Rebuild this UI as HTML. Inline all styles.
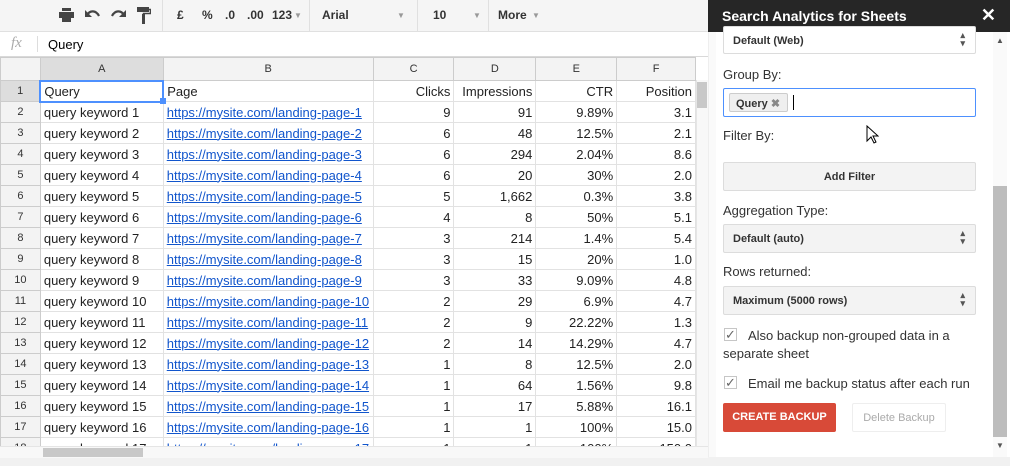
<!DOCTYPE html><html><head><style>
*{box-sizing:border-box;margin:0;padding:0}
body{width:1010px;height:466px;overflow:hidden;background:#fff;font-family:"Liberation Sans",Arial,sans-serif;position:relative}
.abs{position:absolute}
#tb{left:0;top:0;width:708px;height:32px;background:#f5f5f5;border-bottom:1px solid #e0e0e0;font-size:12px;font-weight:bold;color:#333}
#tb span{position:absolute;top:8px}
.dv{position:absolute;top:0;width:1px;height:32px;background:#e0e0e0}
#fx{left:0;top:32px;width:708px;height:25px;border-bottom:1px solid #d9d9d9;font-size:13px}
#grid{left:0;top:57px;width:696px;height:389px;overflow:hidden}
table{border-collapse:collapse;table-layout:fixed;font-size:13px;color:#222}
td{height:21px;border:1px solid #e2e2e2;padding:0 3px;white-space:nowrap;overflow:hidden}
tr.h td{height:23px;background:#f3f3f3;text-align:center;font-size:11px;color:#333;border-color:#ccc}
td.rh{background:#f3f3f3;text-align:center;font-size:11px;color:#333;border-color:#ccc}
td.r{text-align:right}
a{color:#1155cc;text-decoration:underline}
#side{left:708px;top:0;width:302px;height:466px;background:#fff}
#sh{left:708px;top:0;width:302px;height:32px;background:#262626;color:#fff;font-weight:bold;font-size:14px;padding:8px 0 0 14px}
.lbl{position:absolute;left:723px;font-size:13px;color:#333}
.sel{position:absolute;left:723px;width:253px;height:29px;border:1px solid #dcdcdc;border-radius:2px;background:#f3f3f3;font-size:11px;font-weight:bold;color:#333;padding:8px 0 0 9px}
.sel:after{content:"\25B4\A\25BE";white-space:pre;position:absolute;right:10px;top:4px;font-size:9px;line-height:8px;color:#555}
.btn{position:absolute;left:723px;width:253px;height:29px;border:1px solid #dcdcdc;border-radius:2px;background:#f3f3f3;font-size:11px;font-weight:bold;color:#333;text-align:center;padding-top:8px}
.cb{position:absolute;left:724px;width:13px;height:13px;border:1px solid #c6c6c6;background:#fff;color:#666;font-size:13px;line-height:11px;text-align:center}
.ar{color:#999;font-size:8px}
</style></head><body>
<div id="tb" class="abs">
<svg class="abs" style="left:59px;top:8px" width="15" height="14"><rect x="3" y="0" width="9" height="3" fill="#444"/><rect x="0" y="4" width="15" height="6" fill="#444"/><rect x="3" y="9" width="9" height="5" fill="#444"/></svg>
<svg class="abs" style="left:85px;top:9px" width="15" height="10"><path d="M2 6 C5 1 11 1 14 7" stroke="#444" stroke-width="2.2" fill="none"/><path d="M0 1v7h7z" fill="#444"/></svg>
<svg class="abs" style="left:111px;top:9px" width="15" height="10"><path d="M13 6 C10 1 4 1 1 7" stroke="#444" stroke-width="2.2" fill="none"/><path d="M15 1v7h-7z" fill="#444"/></svg>
<svg class="abs" style="left:137px;top:7px" width="14" height="17"><rect x="0" y="0" width="12" height="5" fill="#444"/><rect x="5" y="7" width="3" height="10" fill="#444"/><path d="M12 2.5h1.5v4H6.5v1" stroke="#444" fill="none" stroke-width="1.5"/></svg>
<div class="dv" style="left:162px"></div>
<span style="left:177px">£</span><span style="left:202px">%</span><span style="left:225px">.0</span><span style="left:247px">.00</span><span style="left:272px">123</span><span class="ar" style="left:294px;top:11px">&#9660;</span>
<div class="dv" style="left:309px"></div>
<span style="left:322px">Arial</span><span class="ar" style="left:397px;top:11px">&#9660;</span>
<div class="dv" style="left:417px"></div>
<span style="left:433px">10</span><span class="ar" style="left:473px;top:11px">&#9660;</span>
<div class="dv" style="left:488px"></div>
<span style="left:498px">More</span><span class="ar" style="left:532px;top:11px">&#9660;</span>
</div>
<div id="fx" class="abs"><span class="abs" style="left:11px;top:3px;font-family:'Liberation Serif',serif;font-style:italic;color:#aaa;font-size:15px">fx</span><div class="abs" style="left:37px;top:4px;width:1px;height:16px;background:#ddd"></div><span class="abs" style="left:48px;top:5px">Query</span></div>
<div id="grid" class="abs"><table>
<colgroup><col style="width:40px"><col style="width:123px"><col style="width:210px"><col style="width:81px"><col style="width:82px"><col style="width:81px"><col style="width:79px"></colgroup>
<tr class="h"><td></td><td style="background:#ddd">A</td><td>B</td><td>C</td><td>D</td><td>E</td><td>F</td></tr>
<tr><td class="rh" style="background:#ddd">1</td><td style="border:2px solid #4d90fe">Query</td><td>Page</td><td class="r">Clicks</td><td class="r">Impressions</td><td class="r">CTR</td><td class="r">Position</td></tr>
<tr><td class="rh">2</td><td>query keyword 1</td><td><a>https://mysite.com/landing-page-1</a></td><td class="r">9</td><td class="r">91</td><td class="r">9.89%</td><td class="r">3.1</td></tr>
<tr><td class="rh">3</td><td>query keyword 2</td><td><a>https://mysite.com/landing-page-2</a></td><td class="r">6</td><td class="r">48</td><td class="r">12.5%</td><td class="r">2.1</td></tr>
<tr><td class="rh">4</td><td>query keyword 3</td><td><a>https://mysite.com/landing-page-3</a></td><td class="r">6</td><td class="r">294</td><td class="r">2.04%</td><td class="r">8.6</td></tr>
<tr><td class="rh">5</td><td>query keyword 4</td><td><a>https://mysite.com/landing-page-4</a></td><td class="r">6</td><td class="r">20</td><td class="r">30%</td><td class="r">2.0</td></tr>
<tr><td class="rh">6</td><td>query keyword 5</td><td><a>https://mysite.com/landing-page-5</a></td><td class="r">5</td><td class="r">1,662</td><td class="r">0.3%</td><td class="r">3.8</td></tr>
<tr><td class="rh">7</td><td>query keyword 6</td><td><a>https://mysite.com/landing-page-6</a></td><td class="r">4</td><td class="r">8</td><td class="r">50%</td><td class="r">5.1</td></tr>
<tr><td class="rh">8</td><td>query keyword 7</td><td><a>https://mysite.com/landing-page-7</a></td><td class="r">3</td><td class="r">214</td><td class="r">1.4%</td><td class="r">5.4</td></tr>
<tr><td class="rh">9</td><td>query keyword 8</td><td><a>https://mysite.com/landing-page-8</a></td><td class="r">3</td><td class="r">15</td><td class="r">20%</td><td class="r">1.0</td></tr>
<tr><td class="rh">10</td><td>query keyword 9</td><td><a>https://mysite.com/landing-page-9</a></td><td class="r">3</td><td class="r">33</td><td class="r">9.09%</td><td class="r">4.8</td></tr>
<tr><td class="rh">11</td><td>query keyword 10</td><td><a>https://mysite.com/landing-page-10</a></td><td class="r">2</td><td class="r">29</td><td class="r">6.9%</td><td class="r">4.7</td></tr>
<tr><td class="rh">12</td><td>query keyword 11</td><td><a>https://mysite.com/landing-page-11</a></td><td class="r">2</td><td class="r">9</td><td class="r">22.22%</td><td class="r">1.3</td></tr>
<tr><td class="rh">13</td><td>query keyword 12</td><td><a>https://mysite.com/landing-page-12</a></td><td class="r">2</td><td class="r">14</td><td class="r">14.29%</td><td class="r">4.7</td></tr>
<tr><td class="rh">14</td><td>query keyword 13</td><td><a>https://mysite.com/landing-page-13</a></td><td class="r">1</td><td class="r">8</td><td class="r">12.5%</td><td class="r">2.0</td></tr>
<tr><td class="rh">15</td><td>query keyword 14</td><td><a>https://mysite.com/landing-page-14</a></td><td class="r">1</td><td class="r">64</td><td class="r">1.56%</td><td class="r">9.8</td></tr>
<tr><td class="rh">16</td><td>query keyword 15</td><td><a>https://mysite.com/landing-page-15</a></td><td class="r">1</td><td class="r">17</td><td class="r">5.88%</td><td class="r">16.1</td></tr>
<tr><td class="rh">17</td><td>query keyword 16</td><td><a>https://mysite.com/landing-page-16</a></td><td class="r">1</td><td class="r">1</td><td class="r">100%</td><td class="r">15.0</td></tr>
<tr><td class="rh">18</td><td>query keyword 17</td><td><a>https://mysite.com/landing-page-17</a></td><td class="r">1</td><td class="r">1</td><td class="r">100%</td><td class="r">150.0</td></tr>
</table></div>
<div class="abs" style="left:160px;top:98px;width:6px;height:6px;background:#4d90fe"></div>
<div class="abs" style="left:696px;top:80px;width:12px;height:366px;background:#f8f8f8;border-left:1px solid #e5e5e5"></div>
<div class="abs" style="left:697px;top:82px;width:10px;height:26px;background:#c8c8c8"></div>
<div class="abs" style="left:0;top:446px;width:708px;height:12px;background:#f8f8f8;border-top:1px solid #e5e5e5"></div>
<div class="abs" style="left:43px;top:448px;width:100px;height:9px;background:#c8c8c8"></div>
<div class="abs" style="left:0;top:458px;width:708px;height:8px;background:#f1f1f1"></div>
<div id="side" class="abs"></div>
<div class="abs" style="left:708px;top:32px;width:8px;height:434px;background:#fafafa;border-left:1px solid #eee"></div>
<div id="sh" class="abs">Search Analytics for Sheets<span style="position:absolute;right:14px;top:5px;font-size:18px">&#10005;</span></div>
<div class="sel" style="top:26px;height:28px;background:#fff">Default (Web)</div>
<div class="lbl" style="top:67px">Group By:</div>
<div class="abs" style="left:723px;top:88px;width:253px;height:29px;border:1px solid #4d90fe;border-radius:2px;background:#fff"><div class="abs" style="left:5px;top:4px;width:59px;height:19px;border:1px solid #ccc;border-radius:2px;background:#efefef;font-size:11px;font-weight:bold;padding:3px 0 0 6px;color:#333">Query <span style="color:#888">&#10006;</span></div><div class="abs" style="left:69px;top:6px;width:1px;height:15px;background:#000"></div></div>
<div class="lbl" style="top:128px">Filter By:</div>
<svg class="abs" style="left:866px;top:125px" width="13" height="19"><path d="M1 1v15l4-4 3 6 2-1-3-6h5z" fill="#fff" stroke="#000"/></svg>
<div class="btn" style="top:162px">Add Filter</div>
<div class="lbl" style="top:203px">Aggregation Type:</div>
<div class="sel" style="top:224px">Default (auto)</div>
<div class="lbl" style="top:264px">Rows returned:</div>
<div class="sel" style="top:286px">Maximum (5000 rows)</div>
<div class="cb" style="top:328px">&#10003;</div>
<div class="lbl" style="top:328px;left:748px">Also backup non-grouped data in a</div>
<div class="lbl" style="top:346px">separate sheet</div>
<div class="cb" style="top:376px">&#10003;</div>
<div class="lbl" style="top:376px;left:748px">Email me backup status after each run</div>
<div class="abs" style="left:723px;top:403px;width:113px;height:29px;background:#d84a38;border-radius:2px;color:#fff;font-size:11px;font-weight:bold;text-align:center;padding-top:8px">CREATE BACKUP</div>
<div class="abs" style="left:852px;top:403px;width:94px;height:29px;border:1px solid #eee;border-radius:2px;color:#aaa;font-size:11px;text-align:center;padding-top:8px">Delete Backup</div>
<div class="abs" style="left:993px;top:32px;width:14px;height:425px;background:#fafafa"></div>
<div class="abs" style="left:993px;top:186px;width:14px;height:251px;background:#bdbdbd"></div>
<span class="abs" style="left:996px;top:36px;font-size:8px;color:#555">&#9650;</span>
<span class="abs" style="left:996px;top:441px;font-size:8px;color:#555">&#9660;</span>
<div class="abs" style="left:708px;top:457px;width:302px;height:9px;background:#f1f1f1"></div>
</body></html>
